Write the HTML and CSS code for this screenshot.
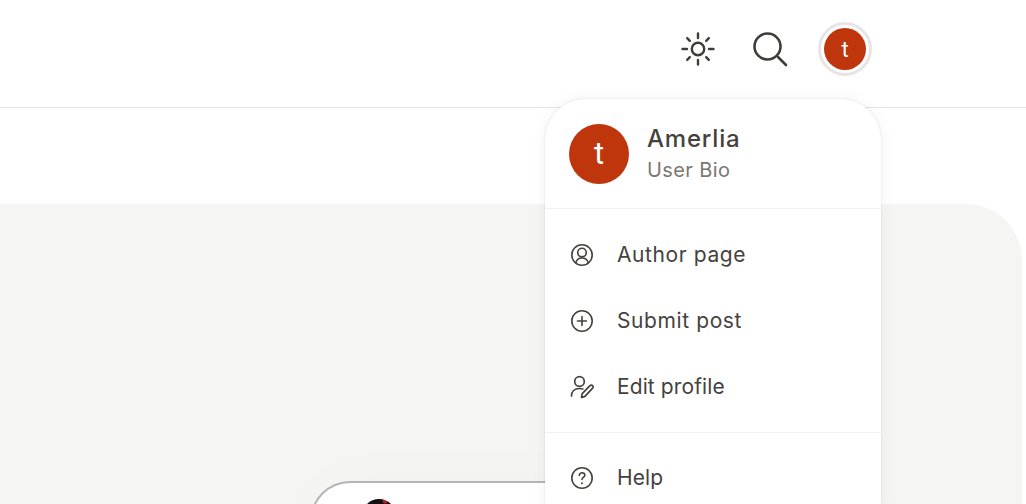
FILE: index.html
```html
<!DOCTYPE html>
<html lang="en">
<head>
  <meta charset="UTF-8">
  <title>Account menu</title>
  <link rel="stylesheet" href="styles.css">
</head>
<body>
  <header class="topbar">
    <button class="icon-button" aria-label="Theme">
      <svg width="36" height="36" viewBox="0 0 36 36" fill="none" stroke="#3f3d3a" stroke-width="2.4" stroke-linecap="round">
        <circle cx="18" cy="18" r="6.2" stroke-width="2.4"/>
        <path d="M18 2.500v4.500M18 29v4.500M2.500 18h4.500M29 18h4.500M7.200 7.200l2.600 2.600M26.200 26.200l2.600 2.600M7.200 28.800l2.600-2.600M26.200 9.800l2.600-2.600"/>
      </svg>
    </button>
    <button class="icon-button" aria-label="Search">
      <svg width="36" height="36" viewBox="0 0 36 36" fill="none" stroke="#3f3d3a" stroke-width="2.600" stroke-linecap="round">
        <circle cx="15.500" cy="15.500" r="13"/>
        <path d="M26 26l8 8"/>
      </svg>
    </button>
    <div class="avatar-ring"><span class="avatar avatar-small">t</span></div>
  </header>

  <main class="content">
    <div class="post-card">
      <span class="post-thumb"></span>
    </div>
  </main>

  <div class="user-menu">
    <div class="menu-head">
      <span class="avatar avatar-large">t</span>
      <div class="menu-user">
        <div class="menu-name">Amerlia</div>
        <div class="menu-bio">User Bio</div>
      </div>
    </div>
    <ul class="menu-list">
      <li class="menu-item">
        <svg width="24" height="24" viewBox="0 0 24 24" fill="none" stroke="#45423e" stroke-width="1.600" stroke-linecap="round">
          <circle cx="12" cy="12" r="10.200"/>
          <circle cx="12" cy="9.600" r="4.300"/>
          <path d="M5.800 19.800c.9-3.200 3.300-4.800 6.200-4.800s5.300 1.600 6.200 4.800"/>
        </svg>
        Author page
      </li>
      <li class="menu-item">
        <svg width="24" height="24" viewBox="0 0 24 24" fill="none" stroke="#45423e" stroke-width="1.600" stroke-linecap="round">
          <circle cx="12" cy="12" r="10.200"/>
          <path d="M12 7.500v9M7.500 12h9"/>
        </svg>
        Submit post
      </li>
      <li class="menu-item menu-item-tight">
        <svg width="24" height="24" viewBox="0 0 24 24" fill="none" stroke="#45423e" stroke-width="1.700" stroke-linecap="round" stroke-linejoin="round">
          <circle cx="9.500" cy="6.500" r="4.800"/>
          <path d="M1.500 21c0-4.500 3-7.500 8-7.500 1.200 0 2.300.2 3.300.5"/>
          <path d="M11.500 22.500l.7-3.800 7.800-8c.8-.8 2-.8 2.700 0 .7.700.6 1.800-.1 2.500l-7.600 8.200z"/>
        </svg>
        Edit profile
      </li>
    </ul>
    <ul class="menu-list menu-list-last">
      <li class="menu-item menu-item-tight">
        <svg width="24" height="24" viewBox="0 0 24 24" fill="none" stroke="#45423e" stroke-width="1.600" stroke-linecap="round" stroke-linejoin="round">
          <circle cx="12" cy="12" r="10.200"/>
          <path d="M9.300 9.500c0-1.600 1.200-2.700 2.800-2.700s2.700 1 2.700 2.400c0 2.100-2.800 2.200-2.800 4.300"/>
          <path d="M12 17.200v.1" stroke-width="2"/>
        </svg>
        Help
      </li>
    </ul>
  </div>
</body>
</html>
```

FILE: styles.css
```css
html, body {
  height: 100%;
}

body {
  margin: 0;
  background-color: #fff;
  font-family: 'Inter', sans-serif;
  color: #45423e;
  overflow: hidden;
  position: relative;
}

.topbar {
  height: 107px;
  border-bottom: 1px solid #e6e5e3;
  display: flex;
  justify-content: flex-end;
  align-items: center;
  padding-right: 154px;
}

.icon-button {
  width: 36px;
  height: 36px;
  padding: 0;
  border: none;
  background: none;
  margin-right: 36px;
  margin-top: -9px;
}

.avatar-ring {
  border: 3px solid #e6e5e3;
  border-radius: 50%;
  padding: 3px;
  margin-top: -9px;
  margin-left: -6px;
}

.avatar {
  display: flex;
  align-items: center;
  justify-content: center;
  border-radius: 50%;
  background-color: #bf360c;
  color: #fff;
  font-family: 'Roboto', sans-serif;
}

.avatar-small {
  width: 42px;
  height: 42px;
  font-size: 22px;
}

.avatar-large {
  width: 60px;
  height: 60px;
  font-size: 31px;
  flex: none;
}

.content {
  margin: 96px 4px 0 0;
  height: 300px;
  background-color: #f5f5f3;
  border-top-right-radius: 56px;
  position: relative;
  overflow: hidden;
}

.post-card {
  position: absolute;
  left: 310px;
  top: 277px;
  width: 400px;
  height: 200px;
  background-color: #fff;
  border: 2px solid #b5b5b3;
  border-bottom: none;
  border-radius: 40px 40px 0 0;
  box-shadow: 0 -8px 60px rgba(0, 0, 0, 0.015);
}

.post-thumb {
  position: absolute;
  left: 50px;
  top: 16px;
  width: 34px;
  height: 34px;
  border-radius: 50%;
  background: radial-gradient(circle at 68% 6%, #b3202a 0 2px, transparent 3px), #111;
}

.user-menu {
  position: absolute;
  left: 545px;
  top: 99px;
  width: 336px;
  height: 440px;
  background-color: #fff;
  border-radius: 40px;
  box-shadow: 0 0 2px rgba(0, 0, 0, 0.14), 0 0 16px rgba(0, 0, 0, 0.05);
}

.menu-head {
  display: flex;
  align-items: center;
  height: 109px;
  padding-left: 24px;
  border-bottom: 1px solid #f1f0ee;
}

.menu-user {
  margin-left: 18px;
}

.menu-name {
  font-size: 24px;
  font-weight: 500;
  line-height: 32px;
  letter-spacing: 0.8px;
}

.menu-bio {
  font-size: 20px;
  line-height: 28px;
  color: #7b7771;
  margin-top: 1px;
  letter-spacing: 0.4px;
}

.menu-list {
  list-style: none;
  margin: 0;
  padding: 13px 0 12px;
  border-bottom: 1px solid #f1f0ee;
}

.menu-list-last {
  padding-top: 12px;
  border-bottom: none;
}

.menu-item {
  display: flex;
  align-items: center;
  height: 64px;
  padding-left: 25px;
  padding-bottom: 2px;
  font-size: 21px;
  letter-spacing: 0.6px;
}

.menu-item-tight {
  letter-spacing: 0.1px;
}

.menu-item svg {
  margin-right: 23px;
  margin-bottom: -2px;
}
```
